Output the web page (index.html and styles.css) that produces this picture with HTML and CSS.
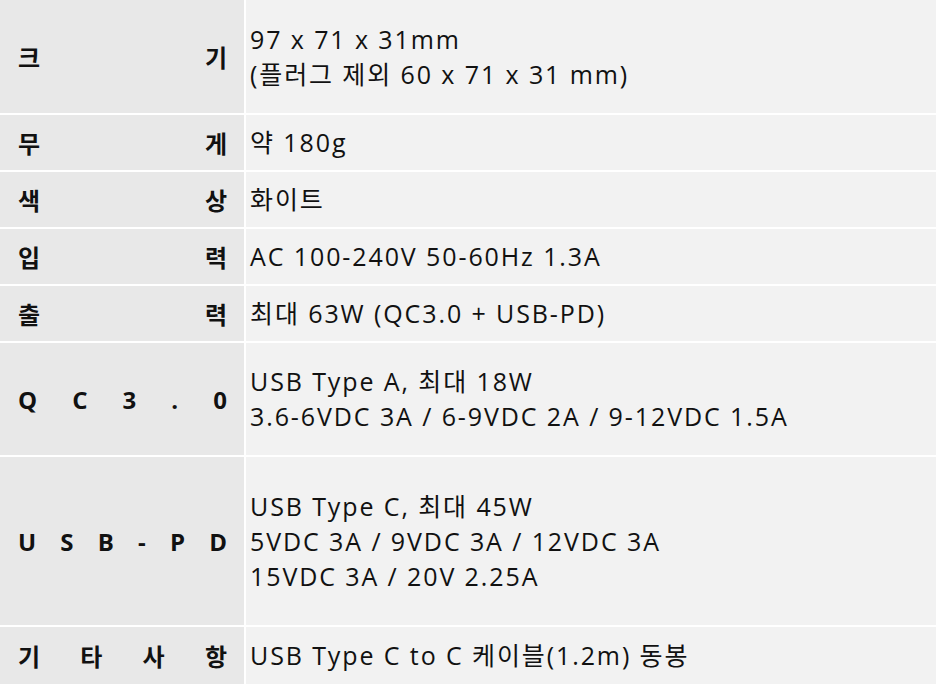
FILE: index.html
```html
<!DOCTYPE html>
<html lang="ko">
<head>
<meta charset="utf-8">
<link rel="stylesheet" href="styles.css">
</head>
<body>
<div class="spec">
  <div class="k r1"><span>크</span><span>기</span></div>
  <div class="v r1">97 x 71 x 31mm<br>(플러그 제외 60 x 71 x 31 mm)</div>

  <div class="k"><span>무</span><span>게</span></div>
  <div class="v">약 180g</div>

  <div class="k"><span>색</span><span>상</span></div>
  <div class="v">화이트</div>

  <div class="k"><span>입</span><span>력</span></div>
  <div class="v">AC 100-240V 50-60Hz 1.3A</div>

  <div class="k"><span>출</span><span>력</span></div>
  <div class="v">최대 63W (QC3.0 + USB-PD)</div>

  <div class="k"><span>Q</span><span>C</span><span>3</span><span>.</span><span>0</span></div>
  <div class="v">USB Type A, 최대 18W<br>3.6-6VDC 3A / 6-9VDC 2A / 9-12VDC 1.5A</div>

  <div class="k"><span>U</span><span>S</span><span>B</span><span>-</span><span>P</span><span>D</span></div>
  <div class="v">USB Type C, 최대 45W<br>5VDC 3A / 9VDC 3A / 12VDC 3A<br>15VDC 3A / 20V 2.25A</div>

  <div class="k"><span>기</span><span>타</span><span>사</span><span>항</span></div>
  <div class="v">USB Type C to C 케이블(1.2m) 동봉</div>
</div>
</body>
</html>
```
FILE: styles.css
```css
html, body {
  margin: 0;
  padding: 0;
  background: #ffffff;
}
.spec {
  width: 936px;
  height: 684px;
  display: grid;
  grid-template-columns: 244px 1fr;
  grid-template-rows: 113px 55px 55px 55px 55px 112px 168px 57px;
  column-gap: 2px;
  row-gap: 2px;
  background: #ffffff;
  font-family: "Open Sans", "Noto Sans CJK KR", sans-serif;
  font-size: 25px;
  color: #111111;
}
.k {
  background: #e8e8e8;
  display: flex;
  justify-content: space-between;
  align-items: center;
  padding: 0 17px 0 18px;
  font-weight: 700;
  font-size: 24px;
}
.v {
  background: #f2f2f2;
  display: flex;
  flex-direction: column;
  justify-content: center;
  padding: 0 0 0 4px;
  line-height: 35px;
  letter-spacing: 1.9px;
}
```
